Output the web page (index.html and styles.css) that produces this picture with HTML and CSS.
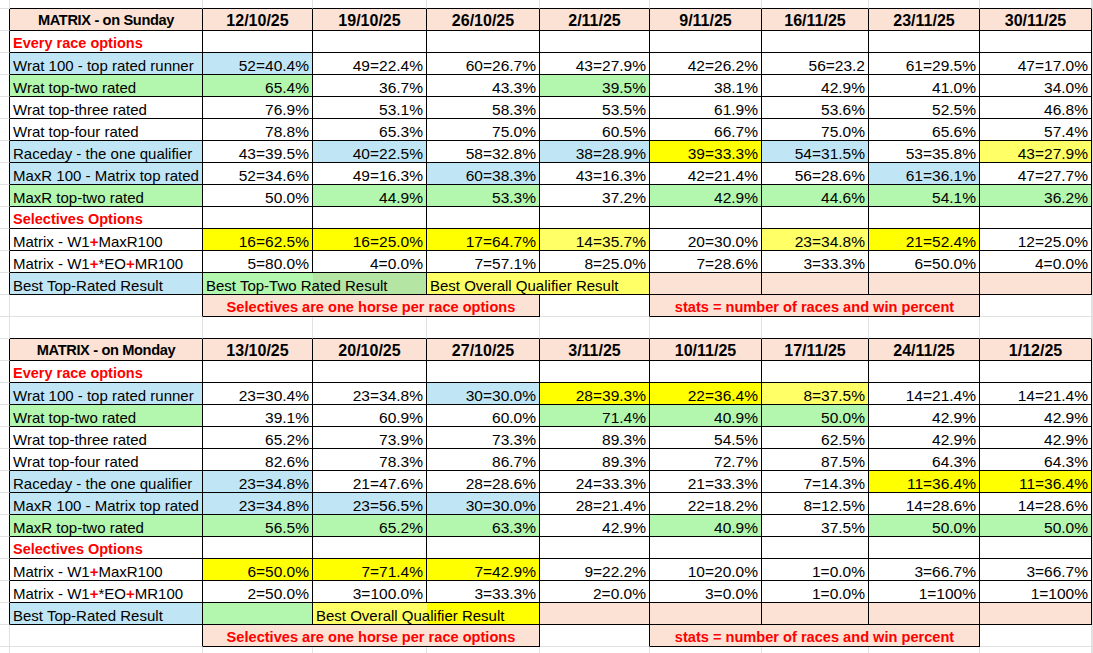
FILE: index.html
```html
<!DOCTYPE html>
<html lang="en">
<head>
<meta charset="utf-8">
<title>Matrix results</title>
<link rel="stylesheet" href="styles.css">
</head>
<body>
<table class="sheet">
<colgroup>
<col class="w-g"><col class="w-1"><col class="w-2"><col class="w-3"><col class="w-4"><col class="w-5"><col class="w-6"><col class="w-7"><col class="w-8"><col class="w-9"><col class="w-z">
</colgroup>
<tbody>
<tr class="edge strip"><td class="g"></td><td></td><td></td><td></td><td></td><td></td><td></td><td></td><td></td><td></td><td class="z"></td></tr>

<tr class="t hd"><td class="g"></td><td class="title">MATRIX - on Sunday</td><td>12/10/25</td><td>19/10/25</td><td>26/10/25</td><td>2/11/25</td><td>9/11/25</td><td>16/11/25</td><td>23/11/25</td><td>30/11/25</td><td class="z"></td></tr>
<tr class="t"><td class="g"></td><td class="sec">Every race options</td><td></td><td></td><td></td><td></td><td></td><td></td><td></td><td></td><td class="z"></td></tr>
<tr class="t"><td class="g"></td><td class="l b">Wrat 100 - top rated runner</td><td class="b">52=40.4%</td><td>49=22.4%</td><td>60=26.7%</td><td>43=27.9%</td><td>42=26.2%</td><td>56=23.2</td><td>61=29.5%</td><td>47=17.0%</td><td class="z"></td></tr>
<tr class="t"><td class="g"></td><td class="l gr">Wrat top-two rated</td><td class="gr">65.4%</td><td>36.7%</td><td>43.3%</td><td class="gr">39.5%</td><td>38.1%</td><td>42.9%</td><td>41.0%</td><td>34.0%</td><td class="z"></td></tr>
<tr class="t"><td class="g"></td><td class="l">Wrat top-three rated</td><td>76.9%</td><td>53.1%</td><td>58.3%</td><td>53.5%</td><td>61.9%</td><td>53.6%</td><td>52.5%</td><td>46.8%</td><td class="z"></td></tr>
<tr class="t"><td class="g"></td><td class="l">Wrat top-four rated</td><td>78.8%</td><td>65.3%</td><td>75.0%</td><td>60.5%</td><td>66.7%</td><td>75.0%</td><td>65.6%</td><td>57.4%</td><td class="z"></td></tr>
<tr class="t"><td class="g"></td><td class="l b">Raceday - the one qualifier</td><td>43=39.5%</td><td class="b">40=22.5%</td><td>58=32.8%</td><td class="b">38=28.9%</td><td class="y">39=33.3%</td><td class="b">54=31.5%</td><td>53=35.8%</td><td class="ly">43=27.9%</td><td class="z"></td></tr>
<tr class="t"><td class="g"></td><td class="l b">MaxR 100 - Matrix top rated</td><td>52=34.6%</td><td>49=16.3%</td><td class="b">60=38.3%</td><td>43=16.3%</td><td>42=21.4%</td><td>56=28.6%</td><td class="b">61=36.1%</td><td>47=27.7%</td><td class="z"></td></tr>
<tr class="t"><td class="g"></td><td class="l gr">MaxR top-two rated</td><td>50.0%</td><td class="gr">44.9%</td><td class="gr">53.3%</td><td>37.2%</td><td class="gr">42.9%</td><td class="gr">44.6%</td><td class="gr">54.1%</td><td class="gr">36.2%</td><td class="z"></td></tr>
<tr class="t"><td class="g"></td><td class="sec">Selectives Options</td><td></td><td></td><td></td><td></td><td></td><td></td><td></td><td></td><td class="z"></td></tr>
<tr class="t"><td class="g"></td><td class="l">Matrix - W1<span class="plus">+</span>MaxR100</td><td class="y">16=62.5%</td><td class="y">16=25.0%</td><td class="y">17=64.7%</td><td class="ly">14=35.7%</td><td>20=30.0%</td><td class="ly">23=34.8%</td><td class="y">21=52.4%</td><td>12=25.0%</td><td class="z"></td></tr>
<tr class="t"><td class="g"></td><td class="l">Matrix - W1<span class="plus">+</span>*EO<span class="plus">+</span>MR100</td><td>5=80.0%</td><td>4=0.0%</td><td>7=57.1%</td><td>8=25.0%</td><td>7=28.6%</td><td>3=33.3%</td><td>6=50.0%</td><td>4=0.0%</td><td class="z"></td></tr>
<tr class="t"><td class="g"></td><td class="l b">Best Top-Rated Result</td><td class="l best-two" colspan="2">Best Top-Two Rated Result</td><td class="l ly" colspan="2">Best Overall Qualifier Result</td><td class="p"></td><td class="p"></td><td class="p"></td><td class="p"></td><td class="z"></td></tr>
<tr class="note"><td class="g"></td><td class="br"></td><td class="msg" colspan="3">Selectives are one horse per race options</td><td class="br"></td><td class="msg" colspan="3">stats = number of races and win percent</td><td></td><td class="z"></td></tr>

<tr class="edge"><td class="g"></td><td></td><td></td><td></td><td></td><td></td><td></td><td></td><td></td><td></td><td class="z"></td></tr>

<tr class="t hd"><td class="g"></td><td class="title">MATRIX - on Monday</td><td>13/10/25</td><td>20/10/25</td><td>27/10/25</td><td>3/11/25</td><td>10/11/25</td><td>17/11/25</td><td>24/11/25</td><td>1/12/25</td><td class="z"></td></tr>
<tr class="t"><td class="g"></td><td class="sec">Every race options</td><td></td><td></td><td></td><td></td><td></td><td></td><td></td><td></td><td class="z"></td></tr>
<tr class="t"><td class="g"></td><td class="l b">Wrat 100 - top rated runner</td><td>23=30.4%</td><td>23=34.8%</td><td class="b">30=30.0%</td><td class="y">28=39.3%</td><td class="y">22=36.4%</td><td class="ly">8=37.5%</td><td>14=21.4%</td><td>14=21.4%</td><td class="z"></td></tr>
<tr class="t"><td class="g"></td><td class="l gr">Wrat top-two rated</td><td>39.1%</td><td>60.9%</td><td>60.0%</td><td class="gr">71.4%</td><td class="gr">40.9%</td><td class="gr">50.0%</td><td>42.9%</td><td>42.9%</td><td class="z"></td></tr>
<tr class="t"><td class="g"></td><td class="l">Wrat top-three rated</td><td>65.2%</td><td>73.9%</td><td>73.3%</td><td>89.3%</td><td>54.5%</td><td>62.5%</td><td>42.9%</td><td>42.9%</td><td class="z"></td></tr>
<tr class="t"><td class="g"></td><td class="l">Wrat top-four rated</td><td>82.6%</td><td>78.3%</td><td>86.7%</td><td>89.3%</td><td>72.7%</td><td>87.5%</td><td>64.3%</td><td>64.3%</td><td class="z"></td></tr>
<tr class="t"><td class="g"></td><td class="l b">Raceday - the one qualifier</td><td class="b">23=34.8%</td><td>21=47.6%</td><td>28=28.6%</td><td>24=33.3%</td><td>21=33.3%</td><td>7=14.3%</td><td class="y">11=36.4%</td><td class="y">11=36.4%</td><td class="z"></td></tr>
<tr class="t"><td class="g"></td><td class="l b">MaxR 100 - Matrix top rated</td><td class="b">23=34.8%</td><td class="b">23=56.5%</td><td class="b">30=30.0%</td><td>28=21.4%</td><td>22=18.2%</td><td>8=12.5%</td><td>14=28.6%</td><td>14=28.6%</td><td class="z"></td></tr>
<tr class="t"><td class="g"></td><td class="l gr">MaxR top-two rated</td><td class="gr">56.5%</td><td class="gr">65.2%</td><td class="gr">63.3%</td><td>42.9%</td><td class="gr">40.9%</td><td>37.5%</td><td class="gr">50.0%</td><td class="gr">50.0%</td><td class="z"></td></tr>
<tr class="t"><td class="g"></td><td class="sec">Selectives Options</td><td></td><td></td><td></td><td></td><td></td><td></td><td></td><td></td><td class="z"></td></tr>
<tr class="t"><td class="g"></td><td class="l">Matrix - W1<span class="plus">+</span>MaxR100</td><td class="y">6=50.0%</td><td class="y">7=71.4%</td><td class="y">7=42.9%</td><td>9=22.2%</td><td>10=20.0%</td><td>1=0.0%</td><td>3=66.7%</td><td>3=66.7%</td><td class="z"></td></tr>
<tr class="t"><td class="g"></td><td class="l">Matrix - W1<span class="plus">+</span>*EO<span class="plus">+</span>MR100</td><td>2=50.0%</td><td>3=100.0%</td><td>3=33.3%</td><td>2=0.0%</td><td>3=0.0%</td><td>1=0.0%</td><td>1=100%</td><td>1=100%</td><td class="z"></td></tr>
<tr class="t"><td class="g"></td><td class="l b">Best Top-Rated Result</td><td class="gr"></td><td class="l best-q" colspan="2">Best Overall Qualifier Result</td><td class="p"></td><td class="p"></td><td class="p"></td><td class="p"></td><td class="p"></td><td class="z"></td></tr>
<tr class="note"><td class="g"></td><td class="br"></td><td class="msg" colspan="3">Selectives are one horse per race options</td><td class="br"></td><td class="msg" colspan="3">stats = number of races and win percent</td><td></td><td class="z"></td></tr>

<tr class="tail"><td class="g"></td><td></td><td></td><td></td><td></td><td></td><td></td><td></td><td></td><td></td><td class="z"></td></tr>
</tbody>
</table>
</body>
</html>
```

FILE: styles.css
```css
html, body {
  margin: 0;
  padding: 0;
  background: #ffffff;
  overflow: hidden;
}

.sheet {
  border-collapse: separate;
  border-spacing: 0;
  table-layout: fixed;
  width: 1093px;
  font-family: "Liberation Sans", Arial, sans-serif;
  font-size: 15.5px;
  color: #000000;
}

.w-g { width: 10px; }
.w-1 { width: 193px; }
.w-2 { width: 110px; }
.w-3 { width: 114px; }
.w-4 { width: 113px; }
.w-5 { width: 110px; }
.w-6 { width: 112px; }
.w-7 { width: 107px; }
.w-8 { width: 111px; }
.w-9 { width: 112px; }
.w-z { width: 1px; }

.sheet tr { height: 22px; }
.sheet tr.strip { height: 9px; }

.sheet td {
  padding: 4px 3px 0 3px;
  line-height: 17px;
  border-right: 1px solid #e1e1e1;
  border-bottom: 1px solid #e1e1e1;
  vertical-align: bottom;
  white-space: nowrap;
  text-align: right;
  overflow: visible;
}

.sheet tr.strip td { padding: 0; }

/* black outlines inside the two tables */
.sheet tr.t td { border-color: #000000; }
.sheet tr.t td.g { border-bottom-color: #e1e1e1; }
.sheet tr.t td.z { border-color: #e1e1e1; }

.sheet tr.edge td { border-bottom-color: #000000; }
.sheet tr.edge td.g,
.sheet tr.edge td.z { border-bottom-color: #e1e1e1; }

.sheet tr.note td.br { border-right-color: #000000; }
.sheet tr.note td.msg { border-color: #000000; }

/* header row */
.sheet tr.hd td {
  background: #fbe2d5;
  text-align: center;
  font-weight: bold;
  font-size: 16px;
  padding-top: 3px;
  padding-bottom: 1px;
}
.sheet tr.hd td.g,
.sheet tr.hd td.z { background: transparent; }
.sheet tr.hd td.title {
  font-size: 14.6px;
  letter-spacing: -0.35px;
}

/* labels */
.l {
  text-align: left !important;
  font-size: 15px;
}
.sec {
  text-align: left !important;
  color: #ff0000;
  font-weight: bold;
  font-size: 14.5px;
}
.plus {
  color: #ff0000;
  font-weight: bold;
}

.msg {
  background: #fbe2d5;
  color: #ff0000;
  font-weight: bold;
  font-size: 14.6px;
  text-align: center !important;
}

/* fills */
.b { background: #c0e6f5; }
.gr { background: #b3f6ae; }
.y { background: #ffff00; }
.ly { background: #ffff66; }
.p { background: #fbe2d5; }
.best-two {
  background: linear-gradient(to right, #b3f6ae 110px, #b5e5a3 110px);
}
.best-q {
  background: linear-gradient(to right, #ffff66 114px, #ffff00 114px);
}
```
